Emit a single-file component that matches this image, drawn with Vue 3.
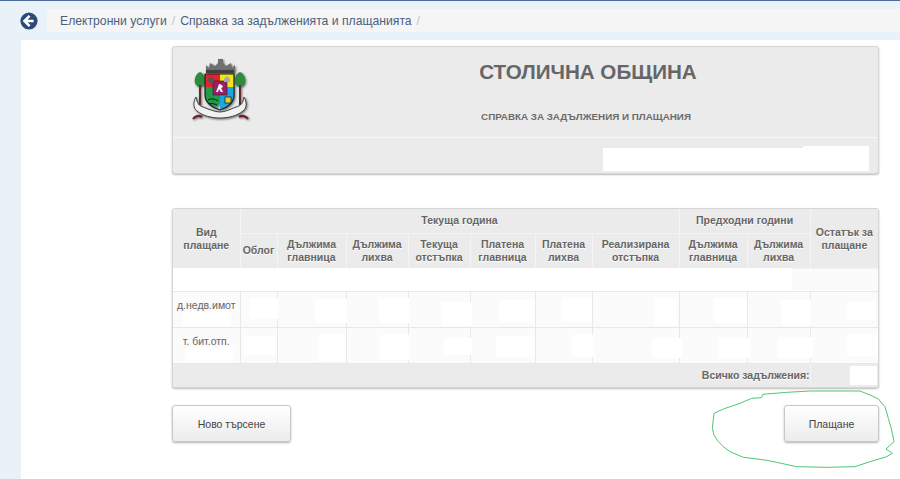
<script setup>
const ox = 173
const oy = 209
const rects = [
  [173, 268, 792, 291],
  [183, 312, 231, 327], [249, 298, 278, 319], [315, 299, 347, 323], [379, 298, 410, 323],
  [442, 302, 472, 326], [499, 300, 535, 322], [562, 297, 592, 322], [654, 298, 677, 326],
  [714, 298, 747, 323], [781, 300, 811, 326], [847, 302, 876, 320],
  [185, 347, 233, 363], [244, 336, 275, 355], [319, 335, 345, 361], [380, 335, 410, 360],
  [444, 338, 472, 355], [496, 336, 535, 357], [572, 335, 594, 357], [652, 338, 683, 358],
  [718, 338, 750, 358], [778, 337, 813, 358], [847, 335, 878, 356],
  [850, 366, 877, 385]
]
const patches = rects.map(([a, b, c, d]) => ({
  left: a - ox + 'px', top: b - oy + 'px', width: c - a + 'px', height: d - b + 'px'
}))
const widths = [67, 37, 69, 62, 62, 65, 57, 87, 68, 63, 68]
const subHeads = [
  ['Облог'], ['Дължима', 'главница'], ['Дължима', 'лихва'], ['Текуща', 'отстъпка'],
  ['Платена', 'главница'], ['Платена', 'лихва'], ['Реализирана', 'отстъпка'],
  ['Дължима', 'главница'], ['Дължима', 'лихва']
]
const emptyCells = 10
</script>

<template>
  <div class="page">
    <header class="crumbs">
      <svg class="back" viewBox="0 0 18 18" aria-hidden="true">
        <circle cx="9" cy="9" r="8.6" fill="#2c4a78" />
        <path d="M9.6 3.9 4.5 9l5.1 5.1M5 9h8.6" fill="none" stroke="#fff" stroke-width="2.6" stroke-linejoin="miter" />
      </svg>
      <nav class="crumb-bar">
        <span>Електронни услуги</span><i>/</i><span>Справка за задълженията и плащанията</span><i>/</i>
      </nav>
    </header>

    <main class="content">
      <section class="panel">
        <div class="panel-top">
          <svg class="crest" viewBox="0 0 60 66" aria-hidden="true">
            <path d="M15 16V8l3 3 1-5 5 3 3-3V2h5v4l3 3 5-3 1 5 3-3v8z" fill="#6f6f6f" />
            <rect x="15" y="13" width="28" height="3" fill="#3f3f3f" />
            <path d="M9 15c-4 2-6 6-5 11 1 3 4 4 5 4s4-1 5-4c1-5-1-9-5-11zM49 15c-4 2-6 6-5 11 1 3 4 4 5 4s4-1 5-4c1-5-1-9-5-11z" fill="#2f8a3e" />
            <path d="M9 28v20M49 28v20" stroke="#5a2d2a" stroke-width="2" />
            <path d="M14 17h15v13H14z" fill="#e8202a" />
            <path d="M29 17h14v13H29z" fill="#f4e515" />
            <path d="M14 30h15v12c0 3-1 6-3 8-4-1-9-3-11-6-1-2-1-4-1-6z" fill="#1f9b4a" />
            <path d="M29 30h14v8c0 6-4 11-9 13l-5 1z" fill="#19a7e0" />
            <path d="M14 17h29v21c0 8-7 13-14 15-7-2-15-7-15-15z" fill="none" stroke="#222" stroke-width="1.2" />
            <rect x="22" y="24" width="14" height="14" fill="#9a1f6b" stroke="#222" stroke-width=".6" />
            <path d="M25 35l2-5 1-3 3 1 1 2-2 1 2 4h-2l-2-3-1 3z" fill="#fff" />
            <circle cx="20" cy="23" r="3" fill="#555" />
            <path d="M33 22l3-3 3 3v3h-6z" fill="#aaa" />
            <rect x="34" y="40" width="6" height="6" fill="#e6cf30" stroke="#222" stroke-width=".8" />
            <path d="M17 43c3-2 7-1 10 1M18 47c3-1 6 0 8 1" stroke="#111" stroke-width="1" fill="none" />
            <path d="M5 40c-3 5-3 11 1 14 6 5 15 7 23 7s17-2 23-7c4-3 4-9 1-14-1 6-3 9-8 10-5 2-11 5-16 5s-12-3-17-5c-4-1-6-4-7-10z" fill="#f1f1f1" stroke="#444" stroke-width="1" />
            <path d="M2 62c2-3 6-4 9-2M57 62c-2-3-6-4-9-2" fill="none" stroke="#6d1f24" stroke-width="2.2" />
          </svg>
          <div class="titles">
            <h1>СТОЛИЧНА ОБЩИНА</h1>
            <h2>СПРАВКА ЗА ЗАДЪЛЖЕНИЯ И ПЛАЩАНИЯ</h2>
          </div>
        </div>
        <div class="panel-bottom">
          <span class="hide-a"></span><span class="hide-b"></span>
        </div>
      </section>

      <section class="table-box">
        <table>
          <colgroup>
            <col v-for="(w, i) in widths" :key="i" :style="{ width: w + 'px' }" />
          </colgroup>
          <thead>
            <tr class="h1">
              <th rowspan="2" class="tall">Вид<br />плащане</th>
              <th colspan="7">Текуща година</th>
              <th colspan="2">Предходни години</th>
              <th rowspan="2" class="tall">Остатък за<br />плащане</th>
            </tr>
            <tr class="h2">
              <th v-for="(h, i) in subHeads" :key="i">
                <template v-for="(line, j) in h" :key="j"><br v-if="j" />{{ line }}</template>
              </th>
            </tr>
          </thead>
          <tbody>
            <tr class="r0"><td colspan="11"></td></tr>
            <tr class="r">
              <td class="label">д.недв.имот</td>
              <td v-for="n in emptyCells" :key="n"></td>
            </tr>
            <tr class="r">
              <td class="label">т. бит.отп.</td>
              <td v-for="n in emptyCells" :key="n"></td>
            </tr>
          </tbody>
          <tfoot>
            <tr class="f">
              <td colspan="10">Всичко задължения:</td>
              <td></td>
            </tr>
          </tfoot>
        </table>
        <span v-for="(p, i) in patches" :key="i" class="patch" :style="p"></span>
      </section>

      <div class="actions">
        <button class="new" type="button">Ново търсене</button>
        <button class="pay" type="button">Плащане</button>
      </div>
    </main>

    <svg class="scribble" viewBox="0 0 630 282" aria-hidden="true">
      <path d="M72 85L100 72L150 55L185 40L215 38L218 28L290 22L360 18L510 18L540 30L565 42L585 65L595 100L605 135L612 170L588 192L607 205L590 215L540 230L495 245L410 247L320 245L260 232L225 225L160 217L120 200L100 185L85 170L72 150L67 130Z" fill="none" stroke="#4cc870" stroke-width="3" />
    </svg>
  </div>
</template>

<style scoped>
.page {
  position: relative;
  box-sizing: border-box;
  height: 479px;
  overflow: hidden;
  background: #eaf2f9;
  border-top: 1px solid #4c6c9c;
  display: flex;
  flex-direction: column;
  font-family: "Liberation Sans", Arial, sans-serif;
}
.crumbs {
  display: flex;
  align-items: center;
  height: 39px;
  box-sizing: border-box;
  padding-left: 20px;
  flex: none;
}
.back {
  width: 18px;
  height: 18px;
  flex: none;
}
.crumb-bar {
  margin-left: 9px;
  flex: 1;
  height: 23px;
  display: flex;
  align-items: center;
  gap: 5px;
  padding-left: 13px;
  background: #f5f5f5;
  font-size: 12.2px;
  color: #4a5f80;
}
.crumb-bar i {
  font-style: normal;
  color: #c4c4c4;
}
.content {
  flex: 1;
  margin-left: 21px;
  background: #fff;
  padding: 6px 21px 0 151px;
}
.panel {
  width: 707px;
  box-sizing: border-box;
  border: 1px solid #d6d6d6;
  border-radius: 3px;
  background: #ebebeb;
  box-shadow: 0 1px 2px rgba(0, 0, 0, .28);
}
.panel-top {
  height: 91px;
  box-sizing: border-box;
  border-bottom: 1px solid #f6f6f6;
  display: flex;
}
.crest {
  width: 60px;
  height: 66px;
  margin: 10px 0 0 18px;
  filter: blur(.35px) drop-shadow(1px 1px 1px rgba(0, 0, 0, .55));
  flex: none;
}
.titles {
  flex: 1;
  text-align: center;
  padding-left: 47px;
}
.titles h1 {
  margin: 13px 0 0;
  font-size: 20.6px;
  line-height: 24px;
  font-weight: 700;
  color: #666;
}
.titles h2 {
  margin: 26px 4px 0 0;
  font-size: 9.8px;
  line-height: 14px;
  font-weight: 700;
  color: #6b6b6b;
}
.panel-bottom {
  height: 35px;
  display: flex;
  align-items: flex-end;
  justify-content: flex-end;
  padding: 0 9px 2px 0;
  box-sizing: border-box;
}
.hide-a {
  width: 200px;
  height: 23px;
  background: #fff;
}
.hide-b {
  width: 66px;
  height: 25px;
  background: #fff;
}
.table-box {
  position: relative;
  width: 707px;
  box-sizing: border-box;
  margin-top: 34px;
  border: 1px solid #d6d6d6;
  border-radius: 3px;
  background: #ebebeb;
  box-shadow: 0 1px 2px rgba(0, 0, 0, .28);
}
table {
  width: 705px;
  table-layout: fixed;
  border-collapse: collapse;
  font-size: 10.5px;
  color: #666;
}
th,
td {
  box-sizing: border-box;
}
th {
  padding: 0;
  background: #ebebeb;
  border: 1px solid #f4f4f4;
  font-weight: 700;
  line-height: 13px;
  text-align: center;
  vertical-align: middle;
  text-shadow: 0 1px 0 #fff;
}
thead tr:first-child th {
  border-top: 0;
}
th:first-child {
  border-left: 0;
}
th:last-child {
  border-right: 0;
}
.h1 th {
  height: 24px;
}
.h2 th {
  height: 35px;
}
.tall {
  vertical-align: top;
  padding-top: 17px;
}
.r0 td {
  height: 23px;
  padding: 0;
  background: #fbfbfb;
  border-bottom: 1px solid #e8e8e8;
}
.r td {
  height: 36px;
  padding: 0;
  background: #fbfbfb;
  border: 1px solid #e8e8e8;
}
.r td:first-child {
  border-left: 0;
}
.r td:last-child {
  border-right: 0;
}
.r .label {
  vertical-align: top;
  text-align: center;
  padding: 7px 0 0;
  line-height: 13px;
  white-space: nowrap;
}
.f td {
  height: 24px;
  padding: 0;
  background: #ebebeb;
  text-align: right;
  font-weight: 700;
  text-shadow: 0 1px 0 #fff;
}
.f td:last-child {
  border-left: 1px solid #f4f4f4;
}
.patch {
  position: absolute;
  background: #fff;
}
.actions {
  width: 707px;
  display: flex;
  justify-content: space-between;
  margin-top: 17px;
}
button {
  height: 37px;
  box-sizing: border-box;
  border: 1px solid #c8c8c8;
  border-radius: 3px;
  background: linear-gradient(#fff, #ececec);
  box-shadow: 0 1px 2px rgba(0, 0, 0, .3);
  font-family: "Liberation Sans", Arial, sans-serif;
  font-size: 10.5px;
  color: #444;
  padding: 0;
}
.new {
  width: 119px;
}
.pay {
  width: 95px;
}
.scribble {
  position: absolute;
  left: 690px;
  top: 384px;
  width: 210px;
  height: 94px;
  overflow: visible;
}
</style>

<style>
html, body {
  margin: 0;
  background: #fff;
}
</style>
